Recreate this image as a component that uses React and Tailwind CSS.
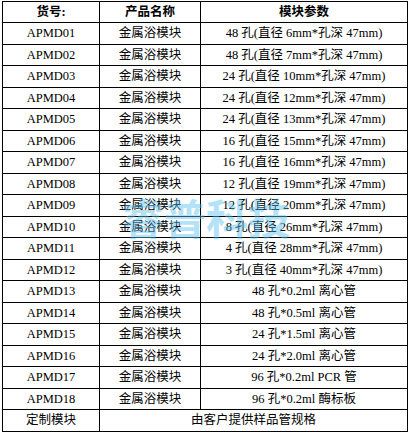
import React from 'react';

const rows = [
  ['APMD01', '金属浴模块', '48 孔(直径 6mm*孔深 47mm)'],
  ['APMD02', '金属浴模块', '48 孔(直径 7mm*孔深 47mm)'],
  ['APMD03', '金属浴模块', '24 孔(直径 10mm*孔深 47mm)'],
  ['APMD04', '金属浴模块', '24 孔(直径 12mm*孔深 47mm)'],
  ['APMD05', '金属浴模块', '24 孔(直径 13mm*孔深 47mm)'],
  ['APMD06', '金属浴模块', '16 孔(直径 15mm*孔深 47mm)'],
  ['APMD07', '金属浴模块', '16 孔(直径 16mm*孔深 47mm)'],
  ['APMD08', '金属浴模块', '12 孔(直径 19mm*孔深 47mm)'],
  ['APMD09', '金属浴模块', '12 孔(直径 20mm*孔深 47mm)'],
  ['APMD10', '金属浴模块', '8 孔(直径 26mm*孔深 47mm)'],
  ['APMD11', '金属浴模块', '4 孔(直径 28mm*孔深 47mm)'],
  ['APMD12', '金属浴模块', '3 孔(直径 40mm*孔深 47mm)'],
  ['APMD13', '金属浴模块', '48 孔*0.2ml 离心管'],
  ['APMD14', '金属浴模块', '48 孔*0.5ml 离心管'],
  ['APMD15', '金属浴模块', '24 孔*1.5ml 离心管'],
  ['APMD16', '金属浴模块', '24 孔*2.0ml 离心管'],
  ['APMD17', '金属浴模块', '96 孔*0.2ml PCR 管'],
  ['APMD18', '金属浴模块', '96 孔*0.2ml 酶标板'],
];

const font = { fontFamily: '"Liberation Serif", "Noto Sans CJK SC", serif' };

// row i (0 = header) alternates 21 / 22 px incl. bottom border
const rowH = (i) => (i % 2 === 0 ? 'h-[21px]' : 'h-[22px]');

export default function App() {
  return (
    <div className="relative w-[411px] h-[432px] bg-white text-black text-[12.5px]" style={font}>
      <div className="absolute left-[2px] top-[1px] w-[406px] border-l border-t border-black">
        <div className={`flex ${rowH(0)} font-bold`}>
          <div className="w-[97px] flex items-center justify-center border-r border-b border-black">货号:</div>
          <div className="w-[101px] flex items-center justify-center border-r border-b border-black">产品名称</div>
          <div className="w-[207px] flex items-center justify-center border-r border-b border-black">模块参数</div>
        </div>
        {rows.map((r, i) => (
          <div key={r[0]} className={`flex ${rowH(i + 1)}`}>
            <div className="w-[97px] flex items-center justify-center border-r border-b border-black">{r[0]}</div>
            <div className="w-[101px] flex items-center justify-center border-r border-b border-black">{r[1]}</div>
            <div className="w-[207px] flex items-center justify-center border-r border-b border-black">{r[2]}</div>
          </div>
        ))}
        <div className={`flex ${rowH(19)}`}>
          <div className="w-[97px] flex items-center justify-center border-r border-b border-black">定制模块</div>
          <div className="w-[308px] flex items-center justify-center border-r border-b border-black">由客户提供样品管规格</div>
        </div>
      </div>

      {/* watermark */}
      <div
        aria-hidden="true"
        className="absolute left-[122px] top-[196px] text-[42px] font-bold leading-none text-[#5bc0f0] opacity-45 pointer-events-none select-none"
        style={{ fontFamily: '"Noto Sans CJK SC", sans-serif' }}
      >
        睿普科技
      </div>
    </div>
  );
}
